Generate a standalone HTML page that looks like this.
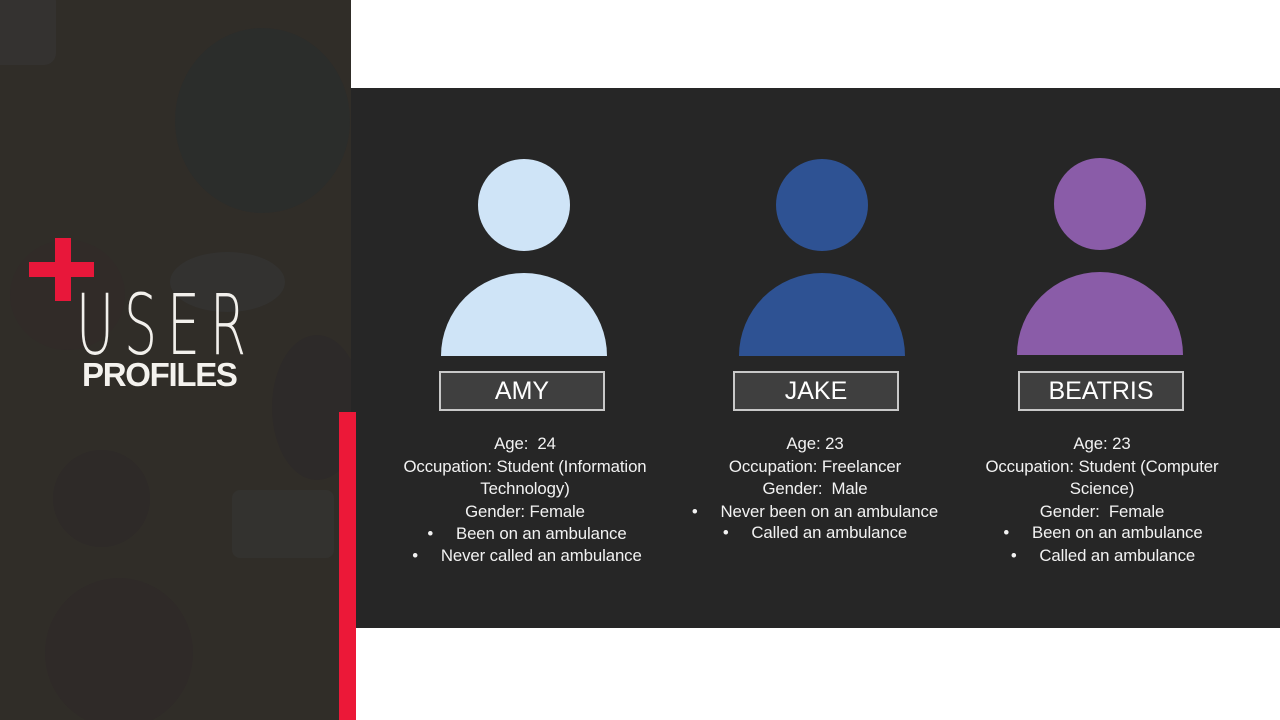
<!DOCTYPE html>
<html><head><style>
*{margin:0;padding:0;box-sizing:border-box}
body{width:1280px;height:720px;position:relative;overflow:hidden;background:#fff;font-family:"Liberation Sans",sans-serif}
.abs{position:absolute}
.l{position:absolute;width:400px;text-align:center;color:#f2f2f2;font-size:16.8px;white-space:pre;line-height:20px;letter-spacing:-0.1px}
.box{position:absolute;top:371px;height:40px;border:2px solid #c8c8c8;background:#3f3f3f;color:#fff;font-size:25px;text-align:center;line-height:36px}
.head{position:absolute;width:92px;height:92px;border-radius:50%}
.body{position:absolute;width:166px;height:83px;border-radius:83px 83px 0 0}
</style></head><body>
<div class="abs" style="left:0;top:0;width:351px;height:720px;background:#302d28;overflow:hidden">
  <div class="abs" style="left:-20px;top:-10px;width:76px;height:75px;border-radius:12px;background:#343230"></div>
  <div class="abs" style="left:175px;top:28px;width:175px;height:185px;border-radius:50%;background:#2b2d2b"></div>
  <div class="abs" style="left:10px;top:240px;width:115px;height:110px;border-radius:50%;background:#312b28"></div>
  <div class="abs" style="left:170px;top:252px;width:115px;height:60px;border-radius:50%;background:#333230"></div>
  <div class="abs" style="left:272px;top:335px;width:90px;height:145px;border-radius:50%;background:#2d2a29"></div>
  <div class="abs" style="left:53px;top:450px;width:97px;height:97px;border-radius:50%;background:#2e2a28"></div>
  <div class="abs" style="left:232px;top:490px;width:102px;height:68px;border-radius:8px;background:#33322f"></div>
  <div class="abs" style="left:45px;top:578px;width:148px;height:150px;border-radius:50%;background:#2f2a28"></div>
</div>
<div class="abs" style="left:351px;top:88px;width:929px;height:540px;background:#262626"></div>
<div class="abs" style="left:339px;top:412px;width:17px;height:308px;background:#ec1838"></div>
<div class="abs" style="left:356px;top:628px;width:924px;height:92px;background:#fff"></div>
<div class="abs" style="left:29px;top:262px;width:65px;height:15px;background:#e8173a"></div>
<div class="abs" style="left:55px;top:238px;width:16px;height:63px;background:#e8173a"></div>
<div class="abs" style="left:76px;top:277px;color:#f2f0ec;font-family:'DejaVu Sans','Liberation Sans',sans-serif;font-size:84px;font-weight:200;letter-spacing:16px;line-height:96px;transform:scaleX(0.62);transform-origin:left top;white-space:nowrap">USER</div>
<div class="abs" style="left:82px;top:357px;color:#f4f2ee;font-size:33px;font-weight:bold;letter-spacing:-1.3px;line-height:36px">PROFILES</div>

<div class="head" style="left:478px;top:159px;background:#cfe4f7"></div>
<div class="body" style="left:441px;top:273px;background:#cfe4f7"></div>
<div class="head" style="left:776px;top:159px;background:#2e5293"></div>
<div class="body" style="left:739px;top:273px;background:#2e5293"></div>
<div class="head" style="left:1054px;top:158px;background:#8a5ca8"></div>
<div class="body" style="left:1017px;top:272px;background:#8a5ca8"></div>

<div class="box" style="left:439px;width:166px">AMY</div>
<div class="box" style="left:733px;width:166px">JAKE</div>
<div class="box" style="left:1018px;width:166px">BEATRIS</div>

<div class="l" style="left:325px;top:434px">Age:  24</div>
<div class="l" style="left:325px;top:457px">Occupation: Student (Information</div>
<div class="l" style="left:325px;top:479px">Technology)</div>
<div class="l" style="left:325px;top:502px">Gender: Female</div>
<div class="l" style="left:327px;top:524px">•     Been on an ambulance</div>
<div class="l" style="left:327px;top:546px">•     Never called an ambulance</div>

<div class="l" style="left:615px;top:434px">Age: 23</div>
<div class="l" style="left:615px;top:457px">Occupation: Freelancer</div>
<div class="l" style="left:615px;top:479px">Gender:  Male</div>
<div class="l" style="left:615px;top:502px">•     Never been on an ambulance</div>
<div class="l" style="left:615px;top:523px">•     Called an ambulance</div>

<div class="l" style="left:902px;top:434px">Age: 23</div>
<div class="l" style="left:902px;top:457px">Occupation: Student (Computer</div>
<div class="l" style="left:902px;top:479px">Science)</div>
<div class="l" style="left:902px;top:502px">Gender:  Female</div>
<div class="l" style="left:903px;top:523px">•     Been on an ambulance</div>
<div class="l" style="left:903px;top:546px">•     Called an ambulance</div>
</body></html>
